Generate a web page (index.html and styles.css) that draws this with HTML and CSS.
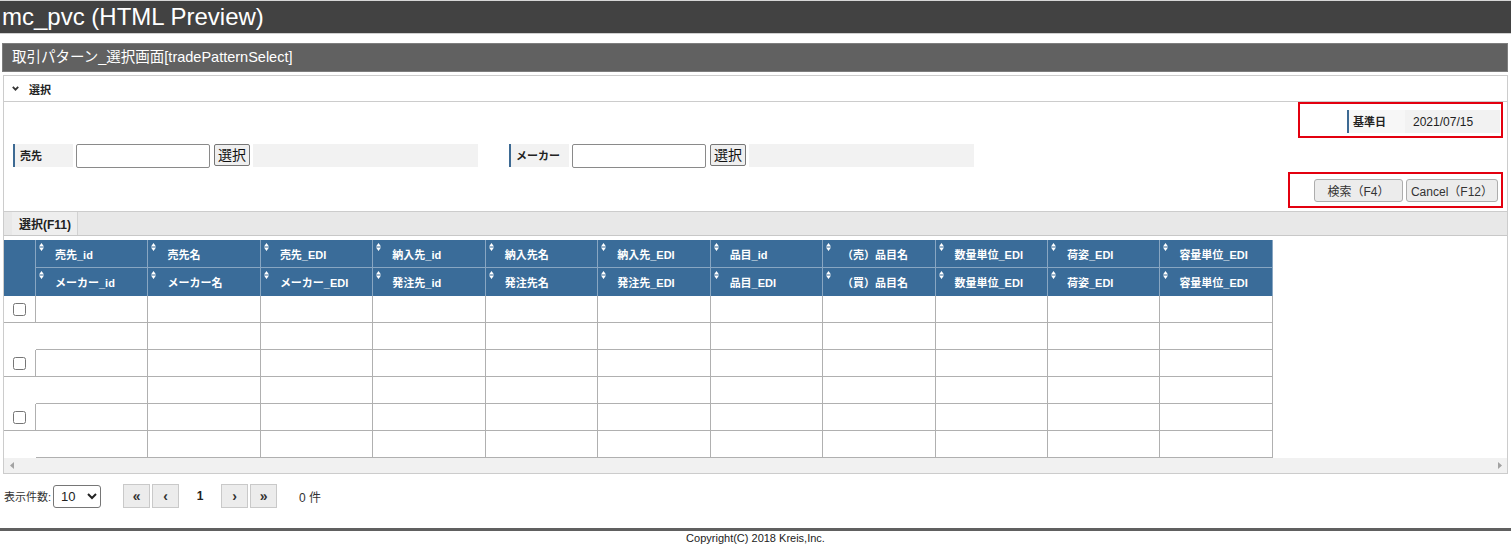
FILE: index.html
```html
<!DOCTYPE html>
<html lang="ja">
<head>
<meta charset="utf-8">
<title>mc_pvc (HTML Preview)</title>
<link rel="stylesheet" href="styles.css">
</head>
<body>
<header class="app-bar">mc_pvc (HTML Preview)</header>
<main class="page">
  <div class="title-bar">取引パターン_選択画面[tradePatternSelect]</div>
  <section class="panel">
    <div class="panel-head">
      <svg class="chev" width="7" height="5" viewBox="0 0 7 5"><polyline points="0.8,0.8 3.5,3.6 6.2,0.8" fill="none" stroke="#333" stroke-width="1.8"/></svg>
      <span>選択</span>
    </div>
    <div class="form-area">
      <div class="row-right">
        <div class="mark mark-date">
          <div class="dfield"><span class="dlbl">基準日</span><span class="dval">2021/07/15</span></div>
        </div>
      </div>
      <div class="row-fields">
        <div class="fgroup"><span class="lbl">売先</span><input class="txt" type="text"><button class="pick">選択</button><span class="fill"></span></div>
        <div class="fgroup"><span class="lbl">メーカー</span><input class="txt" type="text"><button class="pick">選択</button><span class="fill"></span></div>
      </div>
      <div class="row-right">
        <div class="mark mark-btns">
          <button class="act">検索（F4）</button><button class="act">Cancel（F12）</button>
        </div>
      </div>
    </div>
    <div class="tabbar"><span class="tab">選択(F11)</span></div>
    <div class="grid-wrap">
      <div class="grid">
        <div class="hc corner"></div>
        <div class="hc r1"><svg class="sort" width="5" height="8" viewBox="0 0 5 8"><path d="M0 3.4L2.5 0 5 3.4ZM0 4.6L2.5 8 5 4.6Z" fill="#fff"/></svg><span>売先_id</span></div>
        <div class="hc r1"><svg class="sort" width="5" height="8" viewBox="0 0 5 8"><path d="M0 3.4L2.5 0 5 3.4ZM0 4.6L2.5 8 5 4.6Z" fill="#fff"/></svg><span>売先名</span></div>
        <div class="hc r1"><svg class="sort" width="5" height="8" viewBox="0 0 5 8"><path d="M0 3.4L2.5 0 5 3.4ZM0 4.6L2.5 8 5 4.6Z" fill="#fff"/></svg><span>売先_EDI</span></div>
        <div class="hc r1"><svg class="sort" width="5" height="8" viewBox="0 0 5 8"><path d="M0 3.4L2.5 0 5 3.4ZM0 4.6L2.5 8 5 4.6Z" fill="#fff"/></svg><span>納入先_id</span></div>
        <div class="hc r1"><svg class="sort" width="5" height="8" viewBox="0 0 5 8"><path d="M0 3.4L2.5 0 5 3.4ZM0 4.6L2.5 8 5 4.6Z" fill="#fff"/></svg><span>納入先名</span></div>
        <div class="hc r1"><svg class="sort" width="5" height="8" viewBox="0 0 5 8"><path d="M0 3.4L2.5 0 5 3.4ZM0 4.6L2.5 8 5 4.6Z" fill="#fff"/></svg><span>納入先_EDI</span></div>
        <div class="hc r1"><svg class="sort" width="5" height="8" viewBox="0 0 5 8"><path d="M0 3.4L2.5 0 5 3.4ZM0 4.6L2.5 8 5 4.6Z" fill="#fff"/></svg><span>品目_id</span></div>
        <div class="hc r1"><svg class="sort" width="5" height="8" viewBox="0 0 5 8"><path d="M0 3.4L2.5 0 5 3.4ZM0 4.6L2.5 8 5 4.6Z" fill="#fff"/></svg><span>（売）品目名</span></div>
        <div class="hc r1"><svg class="sort" width="5" height="8" viewBox="0 0 5 8"><path d="M0 3.4L2.5 0 5 3.4ZM0 4.6L2.5 8 5 4.6Z" fill="#fff"/></svg><span>数量単位_EDI</span></div>
        <div class="hc r1"><svg class="sort" width="5" height="8" viewBox="0 0 5 8"><path d="M0 3.4L2.5 0 5 3.4ZM0 4.6L2.5 8 5 4.6Z" fill="#fff"/></svg><span>荷姿_EDI</span></div>
        <div class="hc r1"><svg class="sort" width="5" height="8" viewBox="0 0 5 8"><path d="M0 3.4L2.5 0 5 3.4ZM0 4.6L2.5 8 5 4.6Z" fill="#fff"/></svg><span>容量単位_EDI</span></div>

        <div class="hc"><svg class="sort" width="5" height="8" viewBox="0 0 5 8"><path d="M0 3.4L2.5 0 5 3.4ZM0 4.6L2.5 8 5 4.6Z" fill="#fff"/></svg><span>メーカー_id</span></div>
        <div class="hc"><svg class="sort" width="5" height="8" viewBox="0 0 5 8"><path d="M0 3.4L2.5 0 5 3.4ZM0 4.6L2.5 8 5 4.6Z" fill="#fff"/></svg><span>メーカー名</span></div>
        <div class="hc"><svg class="sort" width="5" height="8" viewBox="0 0 5 8"><path d="M0 3.4L2.5 0 5 3.4ZM0 4.6L2.5 8 5 4.6Z" fill="#fff"/></svg><span>メーカー_EDI</span></div>
        <div class="hc"><svg class="sort" width="5" height="8" viewBox="0 0 5 8"><path d="M0 3.4L2.5 0 5 3.4ZM0 4.6L2.5 8 5 4.6Z" fill="#fff"/></svg><span>発注先_id</span></div>
        <div class="hc"><svg class="sort" width="5" height="8" viewBox="0 0 5 8"><path d="M0 3.4L2.5 0 5 3.4ZM0 4.6L2.5 8 5 4.6Z" fill="#fff"/></svg><span>発注先名</span></div>
        <div class="hc"><svg class="sort" width="5" height="8" viewBox="0 0 5 8"><path d="M0 3.4L2.5 0 5 3.4ZM0 4.6L2.5 8 5 4.6Z" fill="#fff"/></svg><span>発注先_EDI</span></div>
        <div class="hc"><svg class="sort" width="5" height="8" viewBox="0 0 5 8"><path d="M0 3.4L2.5 0 5 3.4ZM0 4.6L2.5 8 5 4.6Z" fill="#fff"/></svg><span>品目_EDI</span></div>
        <div class="hc"><svg class="sort" width="5" height="8" viewBox="0 0 5 8"><path d="M0 3.4L2.5 0 5 3.4ZM0 4.6L2.5 8 5 4.6Z" fill="#fff"/></svg><span>（買）品目名</span></div>
        <div class="hc"><svg class="sort" width="5" height="8" viewBox="0 0 5 8"><path d="M0 3.4L2.5 0 5 3.4ZM0 4.6L2.5 8 5 4.6Z" fill="#fff"/></svg><span>数量単位_EDI</span></div>
        <div class="hc"><svg class="sort" width="5" height="8" viewBox="0 0 5 8"><path d="M0 3.4L2.5 0 5 3.4ZM0 4.6L2.5 8 5 4.6Z" fill="#fff"/></svg><span>荷姿_EDI</span></div>
        <div class="hc"><svg class="sort" width="5" height="8" viewBox="0 0 5 8"><path d="M0 3.4L2.5 0 5 3.4ZM0 4.6L2.5 8 5 4.6Z" fill="#fff"/></svg><span>容量単位_EDI</span></div>

        <div class="cb"><input type="checkbox"></div>
        <div class="dc"></div><div class="dc"></div><div class="dc"></div><div class="dc"></div><div class="dc"></div><div class="dc"></div><div class="dc"></div><div class="dc"></div><div class="dc"></div><div class="dc"></div><div class="dc"></div>
        <div class="blank"></div>
        <div class="dc"></div><div class="dc"></div><div class="dc"></div><div class="dc"></div><div class="dc"></div><div class="dc"></div><div class="dc"></div><div class="dc"></div><div class="dc"></div><div class="dc"></div><div class="dc"></div>

        <div class="cb"><input type="checkbox"></div>
        <div class="dc"></div><div class="dc"></div><div class="dc"></div><div class="dc"></div><div class="dc"></div><div class="dc"></div><div class="dc"></div><div class="dc"></div><div class="dc"></div><div class="dc"></div><div class="dc"></div>
        <div class="blank"></div>
        <div class="dc"></div><div class="dc"></div><div class="dc"></div><div class="dc"></div><div class="dc"></div><div class="dc"></div><div class="dc"></div><div class="dc"></div><div class="dc"></div><div class="dc"></div><div class="dc"></div>

        <div class="cb"><input type="checkbox"></div>
        <div class="dc"></div><div class="dc"></div><div class="dc"></div><div class="dc"></div><div class="dc"></div><div class="dc"></div><div class="dc"></div><div class="dc"></div><div class="dc"></div><div class="dc"></div><div class="dc"></div>
        <div class="blank"></div>
        <div class="dc"></div><div class="dc"></div><div class="dc"></div><div class="dc"></div><div class="dc"></div><div class="dc"></div><div class="dc"></div><div class="dc"></div><div class="dc"></div><div class="dc"></div><div class="dc"></div>
      </div>
      <div class="hscroll">
        <svg width="4" height="7" viewBox="0 0 4 7"><path d="M4 0L0 3.5 4 7Z" fill="#a3a3a3"/></svg>
        <svg width="4" height="7" viewBox="0 0 4 7"><path d="M0 0L4 3.5 0 7Z" fill="#a3a3a3"/></svg>
      </div>
    </div>
  </section>
  <div class="pager">
    <span class="pl">表示件数:</span>
    <select class="size"><option>10</option><option>20</option><option>50</option></select>
    <div class="pbtns">
      <button class="pg">«</button><button class="pg">‹</button>
      <span class="pnum">1</span>
      <button class="pg">›</button><button class="pg">»</button>
    </div>
    <span class="count">0 件</span>
  </div>
</main>
<footer class="foot">Copyright(C) 2018 Kreis,Inc.</footer>
</body>
</html>
```

FILE: styles.css
```css
html, body {
  margin: 0;
  padding: 0;
  background: #fff;
}
body {
  font-family: "Liberation Sans", Arial, "Noto Sans CJK JP", sans-serif;
  font-size: 12px;
  color: #333;
}
button, input, select {
  font-family: "Liberation Sans", Arial, "Noto Sans CJK JP", sans-serif;
}

.app-bar {
  border-top: 1px solid #d6d6d6;
  border-bottom: 1px solid #d0d0d0;
  background: #424242;
  color: #fff;
  font-size: 24px;
  height: 32px;
  line-height: 32px;
  padding-left: 2px;
}

.page {
  padding: 9px 3px 0 2px;
}

.title-bar {
  background: #616161;
  border: 1px solid #7e7e7e;
  height: 27px;
  line-height: 27px;
  color: #fff;
  font-size: 14.5px;
  padding-left: 9px;
}

.panel {
  margin: 3px 0 0 1px;
  border: 1px solid #cccccc;
}

.panel-head {
  height: 25px;
  display: flex;
  align-items: center;
  padding-left: 8px;
  border-bottom: 1px solid #cccccc;
  font-weight: bold;
  font-size: 11px;
  color: #222;
}
.panel-head .chev {
  margin-right: 10px;
}

.form-area {
  padding: 0 4px 3px 9px;
}
.row-right {
  display: flex;
  justify-content: flex-end;
}
.mark {
  border: 2px solid #e3000f;
}
.mark-date {
  padding: 6px 1px 3px 47px;
}
.dfield {
  display: flex;
  height: 23px;
  line-height: 24px;
}
.dlbl {
  width: 58px;
  box-sizing: border-box;
  border-left: 2px solid #3d6a93;
  padding-left: 4px;
  background: #f7f7f7;
  font-weight: bold;
  font-size: 11px;
  color: #222;
}
.dval {
  width: 95px;
  box-sizing: border-box;
  padding-left: 8px;
  background: #f2f2f2;
  color: #222;
}

.row-fields {
  display: flex;
  gap: 31px;
  margin-top: 6px;
}
.fgroup {
  width: 465px;
  display: flex;
  align-items: flex-start;
}
.lbl {
  width: 60px;
  height: 23px;
  line-height: 25px;
  box-sizing: border-box;
  border-left: 2px solid #3d6a93;
  padding-left: 5px;
  background: #f2f2f2;
  font-weight: bold;
  font-size: 11px;
  color: #222;
}
.txt {
  width: 134px;
  height: 24px;
  box-sizing: border-box;
  margin: 0 0 0 3px;
  border: 1px solid #8a8a8a;
  border-radius: 2px;
  background: #fff;
}
.pick {
  margin: 0 0 0 4px;
  height: 22px;
  width: 36px;
  padding: 0;
  box-sizing: border-box;
  border: 1px solid #767676;
  border-radius: 2px;
  background: #efefef;
  font-size: 14px;
  line-height: 20px;
  color: #111;
}
.fill {
  flex: 1;
  height: 23px;
  margin-left: 3px;
  background: #f2f2f2;
}

.row-right + .row-fields + .row-right {
  margin-top: 4px;
}
.mark-btns {
  display: flex;
  gap: 3px;
  padding: 5px 3px 4px 24px;
}
.act {
  height: 23px;
  min-width: 89px;
  padding: 0 4px;
  box-sizing: border-box;
  border: 1px solid #adadad;
  border-radius: 3px;
  background: #ececec;
  font-size: 12px;
  color: #333;
}

.tabbar {
  height: 23px;
  border-top: 1px solid #cccccc;
  border-bottom: 1px solid #c8c8c8;
  background: #e8e8e8;
  display: flex;
  padding-left: 8px;
}
.tab {
  display: flex;
  align-items: center;
  padding: 0 6px 0 7px;
  background: #eeeeee;
  border-right: 1px solid #d2d2d2;
  font-weight: bold;
  color: #222;
}

.grid-wrap {
  padding-top: 4px;
}
.grid {
  display: grid;
  grid-template-columns: 32px repeat(11, 112.45px);
  grid-template-rows: 28px 28px repeat(6, 27px);
}
.hc {
  background: #3a6c99;
  border-right: 1px solid #88a6c2;
  color: #fff;
  font-weight: bold;
  font-size: 11px;
  display: flex;
  align-items: center;
  padding-left: 3px;
  white-space: nowrap;
  overflow: hidden;
}
.hc.r1 {
  border-bottom: 1px solid #88a6c2;
}
.hc.corner {
  grid-row: span 2;
}
.hc .sort {
  align-self: flex-start;
  margin-top: 3px;
  margin-right: 11px;
  flex: none;
}
.cb {
  border-right: 1px solid #b0b0b0;
  border-bottom: 1px solid #b0b0b0;
  display: flex;
  align-items: center;
  justify-content: center;
}
.cb input {
  margin: 0;
  width: 13px;
  height: 13px;
}
.dc {
  border-right: 1px solid #b0b0b0;
  border-bottom: 1px solid #b0b0b0;
}

.hscroll {
  height: 15px;
  background: #f1f1f1;
  display: flex;
  align-items: center;
  justify-content: space-between;
  padding: 0 5px 0 6px;
}

.pager {
  margin-top: 10px;
  height: 24px;
  display: flex;
  align-items: center;
  padding-left: 2px;
}
.pl {
  font-size: 11px;
  color: #333;
}
.size {
  margin-left: 2px;
  width: 48px;
  height: 23px;
  font-size: 13px;
  border: 1px solid #767676;
  border-radius: 3px;
  background: #fff;
  padding-left: 3px;
  color: #222;
}
.pbtns {
  display: flex;
  align-items: center;
  margin-left: 22px;
  gap: 2px;
}
.pg {
  width: 27px;
  height: 24px;
  padding: 0;
  border: 1px solid #c9c9c9;
  background: #ececec;
  font-size: 14px;
  font-weight: bold;
  color: #333;
  line-height: 20px;
}
.pnum {
  width: 38px;
  text-align: center;
  font-weight: bold;
  color: #222;
}
.count {
  margin-left: 22px;
  color: #333;
}

.foot {
  margin-top: 20px;
  border-top: 3px solid #606060;
  text-align: center;
  font-size: 11px;
  line-height: 13px;
  padding-top: 1px;
  color: #222;
}
```
